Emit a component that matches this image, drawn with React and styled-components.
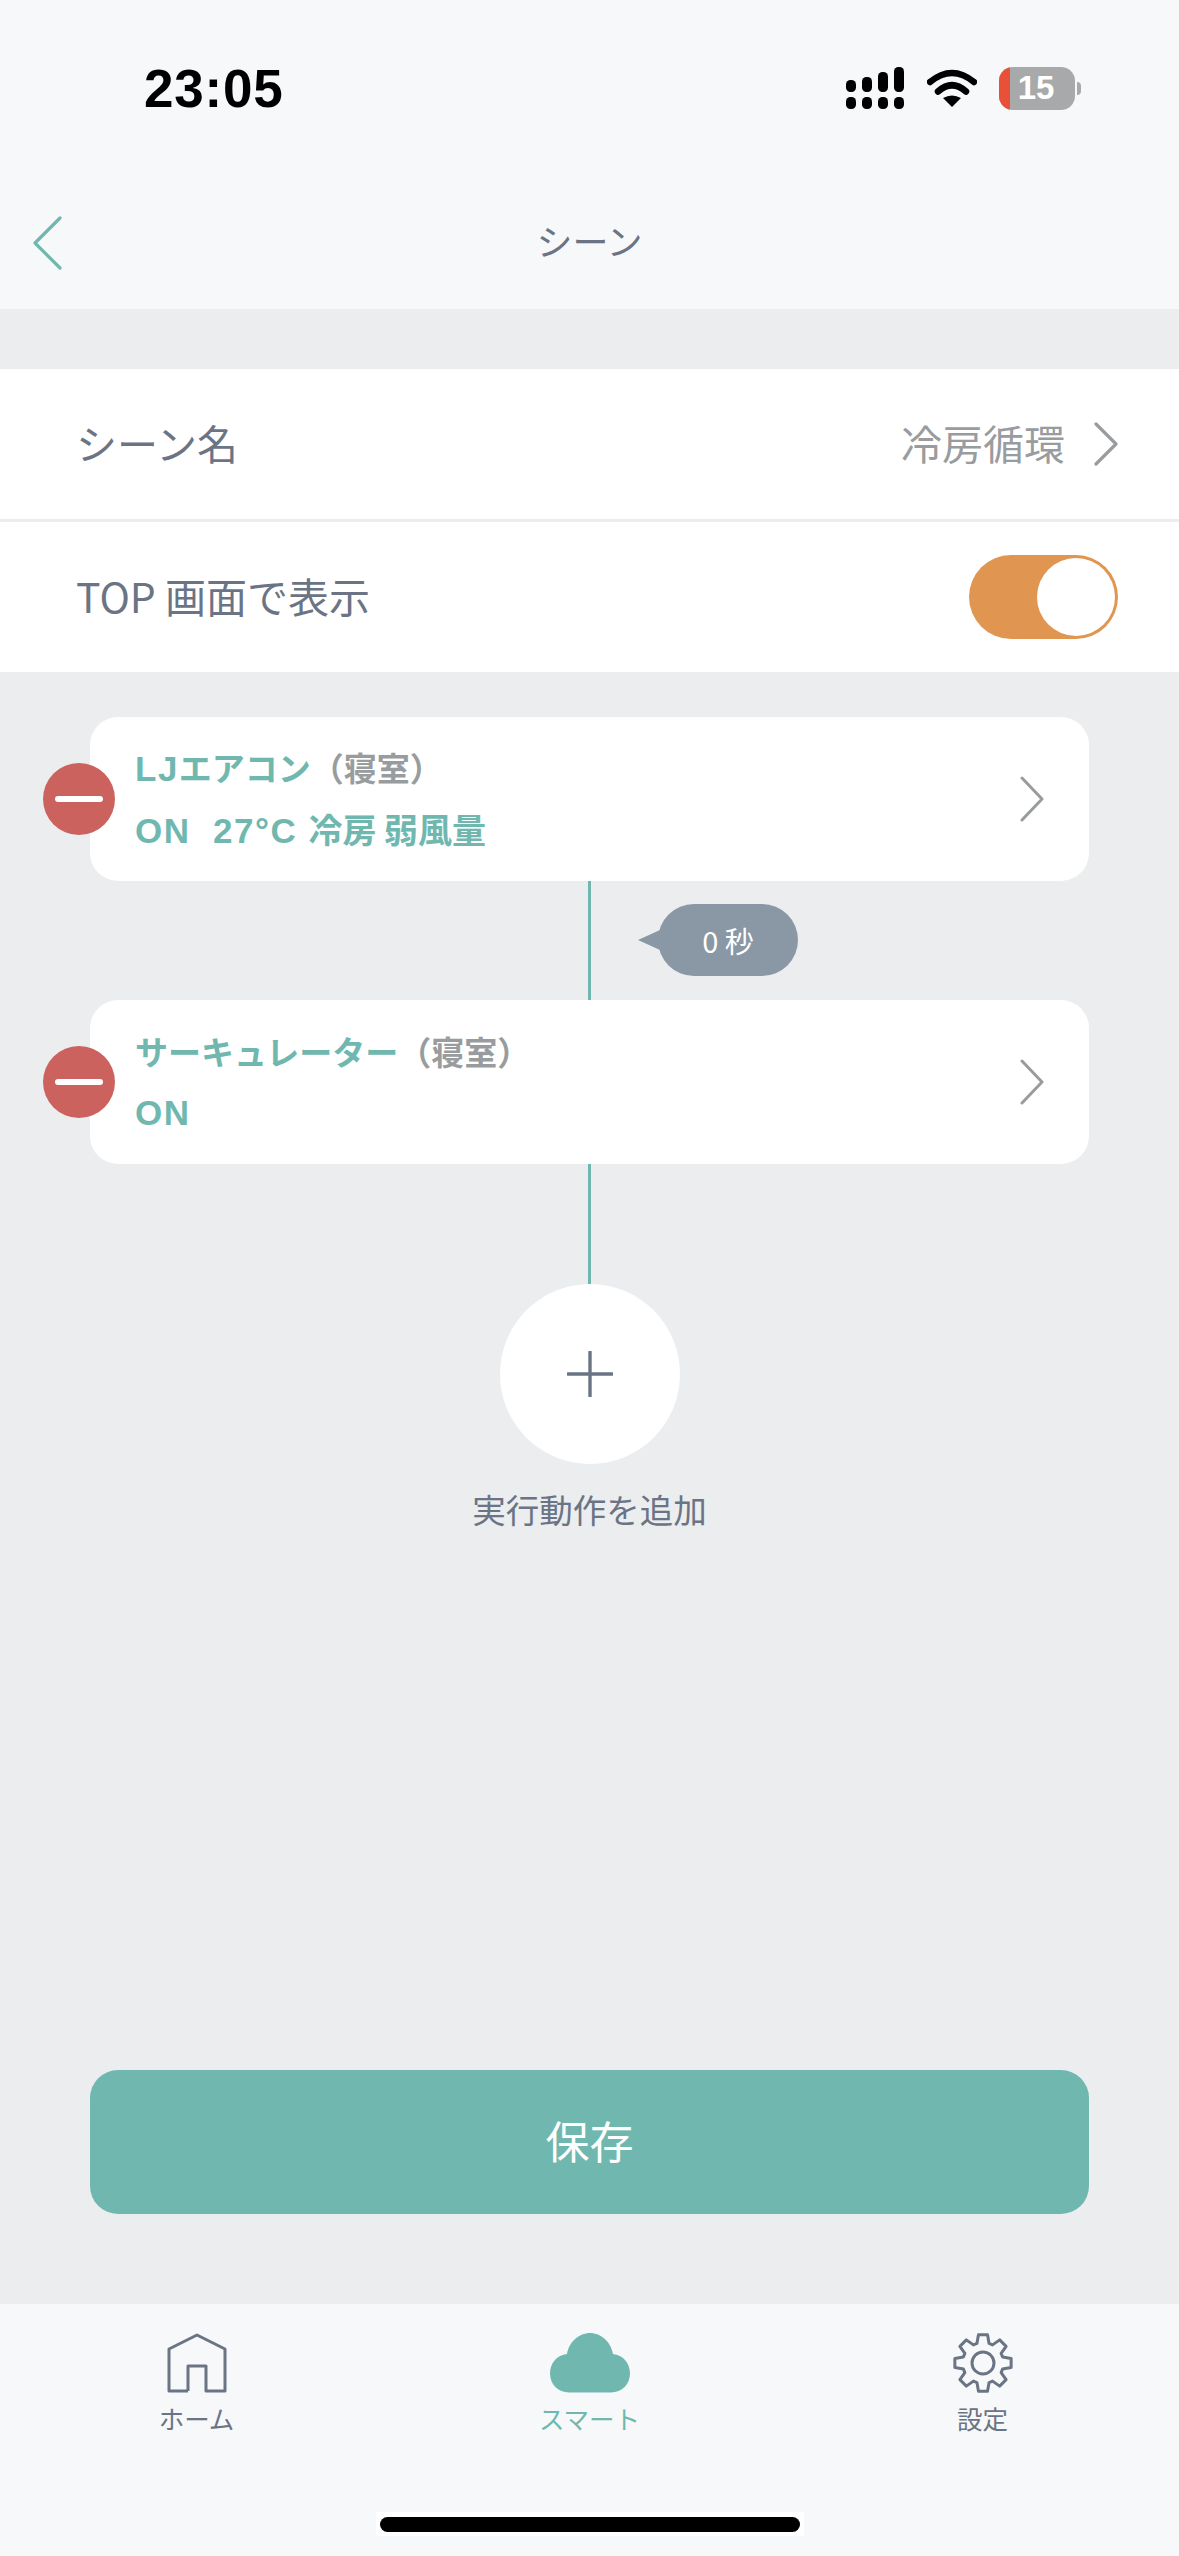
import React from 'react'
import styled, { createGlobalStyle } from 'styled-components'

const TEAL = '#70B8AF'
const SLATE = '#6B7485'
const GREY = '#999C9E'

const GlobalStyle = createGlobalStyle`
  html, body {
    margin: 0;
    padding: 0;
    background: #F7F8FA;
  }
  * {
    box-sizing: border-box;
  }
  body {
    font-family: "Noto Sans CJK JP", "Noto Sans", sans-serif;
  }
`

const Page = styled.div`
  width: 1179px;
  height: 2556px;
  display: flex;
  flex-direction: column;
  background: #EBEDEE;
  overflow: hidden;
`

const Header = styled.header`
  height: 309px;
  flex: none;
  background: #F7F8FA;
`

const StatusBar = styled.div`
  height: 176px;
  display: flex;
  align-items: center;
  justify-content: space-between;
  padding: 0 98px 0 144px;
`

const Time = styled.span`
  font-family: "Liberation Sans", Inter, sans-serif;
  font-size: 53px;
  font-weight: 700;
  color: #000;
  letter-spacing: 0.8px;
`

const StatusIcons = styled.div`
  display: flex;
  align-items: center;
  gap: 22px;
`

const Battery = styled.div`
  position: relative;
  width: 76px;
  height: 43px;
  border-radius: 14px;
  background: #A8A9AA;
  overflow: hidden;
  display: flex;
  align-items: center;
  justify-content: center;
  padding-right: 2px;
  color: #fff;
  font-family: "Liberation Sans", Inter, sans-serif;
  font-size: 33px;
  font-weight: 700;
  &::before {
    content: '';
    position: absolute;
    left: 0;
    top: 0;
    bottom: 0;
    width: 11px;
    background: #E8503A;
  }
`

const BatteryWrap = styled.div`
  display: flex;
  align-items: center;
  gap: 2px;
`

const BatteryNub = styled.div`
  width: 4px;
  height: 13px;
  border-radius: 0 4px 4px 0;
  background: #A8A9AA;
`

const NavBar = styled.div`
  position: relative;
  height: 133px;
  display: flex;
  align-items: center;
  justify-content: center;
`

const BackButton = styled.div`
  position: absolute;
  left: 33px;
  top: 40px;
  display: flex;
`

const Title = styled.h1`
  margin: 0 0 5px;
  font-size: 36px;
  font-weight: 400;
  color: ${SLATE};
`

const Form = styled.section`
  margin-top: 60px;
  flex: none;
  background: #fff;
`

const FormRow = styled.div`
  height: ${(p) => p.$height}px;
  display: flex;
  align-items: center;
  justify-content: space-between;
  padding: 0 61px 0 76px;
  ${(p) => p.$divided && 'border-bottom: 3px solid #EBEDEE;'}
`

const RowLabel = styled.span`
  margin-bottom: 4px;
  font-size: 41px;
  font-weight: 400;
  color: ${SLATE};
`

const RowValue = styled.div`
  display: flex;
  align-items: center;
  gap: 29px;
  font-size: 41px;
  color: ${GREY};
  span {
    margin-bottom: 4px;
  }
`

const Toggle = styled.div`
  width: 149px;
  height: 84px;
  border-radius: 42px;
  background: #E09550;
  padding: 3px;
  display: flex;
  justify-content: flex-end;
`

const Knob = styled.div`
  width: 78px;
  height: 78px;
  border-radius: 50%;
  background: #fff;
`

const Flow = styled.main`
  flex: 1;
  display: flex;
  flex-direction: column;
  align-items: center;
  padding: 45px 90px 90px;
`

const Card = styled.div`
  position: relative;
  width: 999px;
  height: 164px;
  flex: none;
  background: #fff;
  border-radius: 28px;
  display: flex;
  align-items: center;
  justify-content: space-between;
  padding: 0 45px;
`

const RemoveBadge = styled.div`
  position: absolute;
  left: -47px;
  top: 46px;
  width: 72px;
  height: 72px;
  border-radius: 50%;
  background: #CB625E;
  display: flex;
  align-items: center;
  justify-content: center;
  &::after {
    content: '';
    width: 48px;
    height: 6px;
    border-radius: 3px;
    background: #fff;
  }
`

const CardText = styled.div`
  display: flex;
  flex-direction: column;
  gap: 14px;
`

const CardLine = styled.div`
  font-size: ${(p) => p.$size}px;
  line-height: 46px;
  font-weight: 700;
  color: ${TEAL};
  white-space: pre;
`

const Latin = styled.span`
  font-family: "Liberation Sans", sans-serif;
  font-size: 35px;
  letter-spacing: ${(p) => p.$spacing || 0}px;
`

const Room = styled.span`
  color: ${GREY};
`

const Connector = styled.div`
  position: relative;
  width: 3px;
  height: ${(p) => p.$height}px;
  flex: none;
  background: ${TEAL};
`

const DelayBubble = styled.div`
  position: absolute;
  left: 70px;
  top: 23px;
  width: 140px;
  height: 72px;
  border-radius: 36px;
  background: #8A97A5;
  color: #fff;
  font-size: 29px;
  display: flex;
  align-items: center;
  justify-content: center;
  white-space: pre;
  &::before {
    content: '';
    position: absolute;
    left: -20px;
    top: 26px;
    border-style: solid;
    border-width: 10px 22px 10px 0;
    border-color: transparent #8A97A5 transparent transparent;
  }
`

const AddButton = styled.div`
  width: 180px;
  height: 180px;
  flex: none;
  border-radius: 50%;
  background: #fff;
  display: flex;
  align-items: center;
  justify-content: center;
`

const AddLabel = styled.div`
  margin-top: 19px;
  font-size: 33.5px;
  line-height: 52px;
  color: ${SLATE};
`

const SaveButton = styled.button`
  margin-top: auto;
  width: 999px;
  height: 144px;
  flex: none;
  border: 0;
  border-radius: 28px;
  padding: 0 0 5px;
  background: ${TEAL};
  color: #fff;
  font-family: inherit;
  font-size: 44px;
`

const TabBar = styled.nav`
  position: relative;
  height: 252px;
  flex: none;
  background: #F7F8FA;
  display: grid;
  grid-template-columns: repeat(3, 393px);
  padding-top: 29px;
`

const Tab = styled.div`
  display: flex;
  flex-direction: column;
  align-items: center;
  gap: 5px;
  font-size: 25.5px;
  line-height: 40px;
  color: ${(p) => (p.$active ? TEAL : SLATE)};
`

const HomeIndicator = styled.div`
  position: absolute;
  left: 376px;
  bottom: 20px;
  width: 428px;
  height: 24px;
  background: #fff;
  padding: 5px 4px 4px;
  &::after {
    content: '';
    display: block;
    height: 15px;
    border-radius: 8px;
    background: #000;
  }
`

const Chevron = ({ color = GREY, width = 24, height = 42, stroke = 3, back }) => (
  <svg width={width} height={height} viewBox={`0 0 ${width} ${height}`} fill="none">
    <path
      d={back
        ? `M${width - 2} 2L2 ${height / 2}L${width - 2} ${height - 2}`
        : `M2 2L${width - 2} ${height / 2}L2 ${height - 2}`}
      stroke={color}
      strokeWidth={stroke}
      strokeLinecap="round"
      strokeLinejoin="round"
    />
  </svg>
)

const SignalIcon = () => (
  <svg width="60" height="42" viewBox="0 0 60 42" fill="#000">
    <rect x="1" y="13" width="10" height="12" rx="4.5" />
    <rect x="17" y="10" width="10" height="15" rx="4.5" />
    <rect x="33" y="5" width="10" height="20" rx="4.5" />
    <rect x="49" y="0" width="10" height="25" rx="4.5" />
    <rect x="1" y="30" width="10" height="12" rx="4.5" />
    <rect x="17" y="30" width="10" height="12" rx="4.5" />
    <rect x="33" y="30" width="10" height="12" rx="4.5" />
    <rect x="49" y="30" width="10" height="12" rx="4.5" />
  </svg>
)

const WifiIcon = () => (
  <svg width="50" height="38" viewBox="0 0 50 38" fill="none">
    <path d="M3 13Q25 -5 47 13" stroke="#000" strokeWidth="6.5" strokeLinecap="round" />
    <path d="M11 22.5Q25 10 39 22.5" stroke="#000" strokeWidth="6.5" strokeLinecap="round" />
    <path d="M16 29Q25 24 34 29L25 38Z" fill="#000" />
  </svg>
)

const HomeIcon = () => (
  <svg width="60" height="60" viewBox="0 0 60 60" fill="none">
    <path d="M21 58H2V16L30 2L58 16V58H39V33H21V58" stroke={SLATE} strokeWidth="3" strokeLinejoin="round" />
  </svg>
)

const CloudIcon = () => (
  <svg width="80" height="60" viewBox="0 0 80 60" fill={TEAL}>
    <path d="M19 59.5C8 59.5 0 51 0 40.5C0 30 7 22 17 21C19 9 29 0 40 0C51 0 61 9 63 21C73 22 80 30 80 40.5C80 51 72 59.5 61 59.5Z" />
  </svg>
)

// eight teeth, worked out from the angles so they stay even
const gearPath = Array.from({ length: 8 }, (_, i) => {
  const a = (i * Math.PI) / 4 - Math.PI / 2
  const pt = (r, d) => `${(30 + r * Math.cos(a + d)).toFixed(2)} ${(30 + r * Math.sin(a + d)).toFixed(2)}`
  return `${i === 0 ? 'M' : 'L'}${pt(20.5, -0.3)}L${pt(28.5, -0.16)}L${pt(28.5, 0.16)}L${pt(20.5, 0.3)}`
}).join('') + 'Z'

const GearIcon = () => (
  <svg width="60" height="60" viewBox="0 0 60 60" fill="none">
    <path d={gearPath} stroke={SLATE} strokeWidth="3" strokeLinejoin="round" />
    <circle cx="30" cy="30" r="11" stroke={SLATE} strokeWidth="3" />
  </svg>
)

const PlusIcon = () => (
  <svg width="46" height="46" viewBox="0 0 46 46">
    <path d="M23 1V45M1 23H45" stroke={SLATE} strokeWidth="3.4" strokeLinecap="round" />
  </svg>
)

function ActionCard({ name, status }) {
  return (
    <Card>
      <RemoveBadge />
      <CardText>
        <CardLine $size={33}>
          {name}
          <Room>（寝室）</Room>
        </CardLine>
        <CardLine $size={34}>{status}</CardLine>
      </CardText>
      <Chevron width={24} height={46} stroke={3} />
    </Card>
  )
}

export default function App() {
  return (
    <>
      <GlobalStyle />
      <Page>
        <Header>
          <StatusBar>
            <Time>23:05</Time>
            <StatusIcons>
              <SignalIcon />
              <WifiIcon />
              <BatteryWrap>
                <Battery>15</Battery>
                <BatteryNub />
              </BatteryWrap>
            </StatusIcons>
          </StatusBar>
          <NavBar>
            <BackButton>
              <Chevron back color={TEAL} width={29} height={54} stroke={3.2} />
            </BackButton>
            <Title>シーン</Title>
          </NavBar>
        </Header>

        <Form>
          <FormRow $height={153} $divided>
            <RowLabel>シーン名</RowLabel>
            <RowValue>
              <span>冷房循環</span>
              <Chevron width={24} height={44} stroke={3.2} />
            </RowValue>
          </FormRow>
          <FormRow $height={150}>
            <RowLabel>TOP 画面で表示</RowLabel>
            <Toggle>
              <Knob />
            </Toggle>
          </FormRow>
        </Form>

        <Flow>
          <ActionCard
            name={<><Latin $spacing={1.5}>LJ</Latin>エアコン</>}
            status={<><Latin $spacing={1.5}>ON  27°C </Latin>冷房 弱風量</>}
          />
          <Connector $height={119}>
            <DelayBubble>0 秒</DelayBubble>
          </Connector>
          <ActionCard name="サーキュレーター" status={<Latin $spacing={1.5}>ON</Latin>} />
          <Connector $height={120} />
          <AddButton>
            <PlusIcon />
          </AddButton>
          <AddLabel>実行動作を追加</AddLabel>
          <SaveButton>保存</SaveButton>
        </Flow>

        <TabBar>
          <Tab>
            <HomeIcon />
            ホーム
          </Tab>
          <Tab $active>
            <CloudIcon />
            スマート
          </Tab>
          <Tab>
            <GearIcon />
            設定
          </Tab>
          <HomeIndicator />
        </TabBar>
      </Page>
    </>
  )
}
